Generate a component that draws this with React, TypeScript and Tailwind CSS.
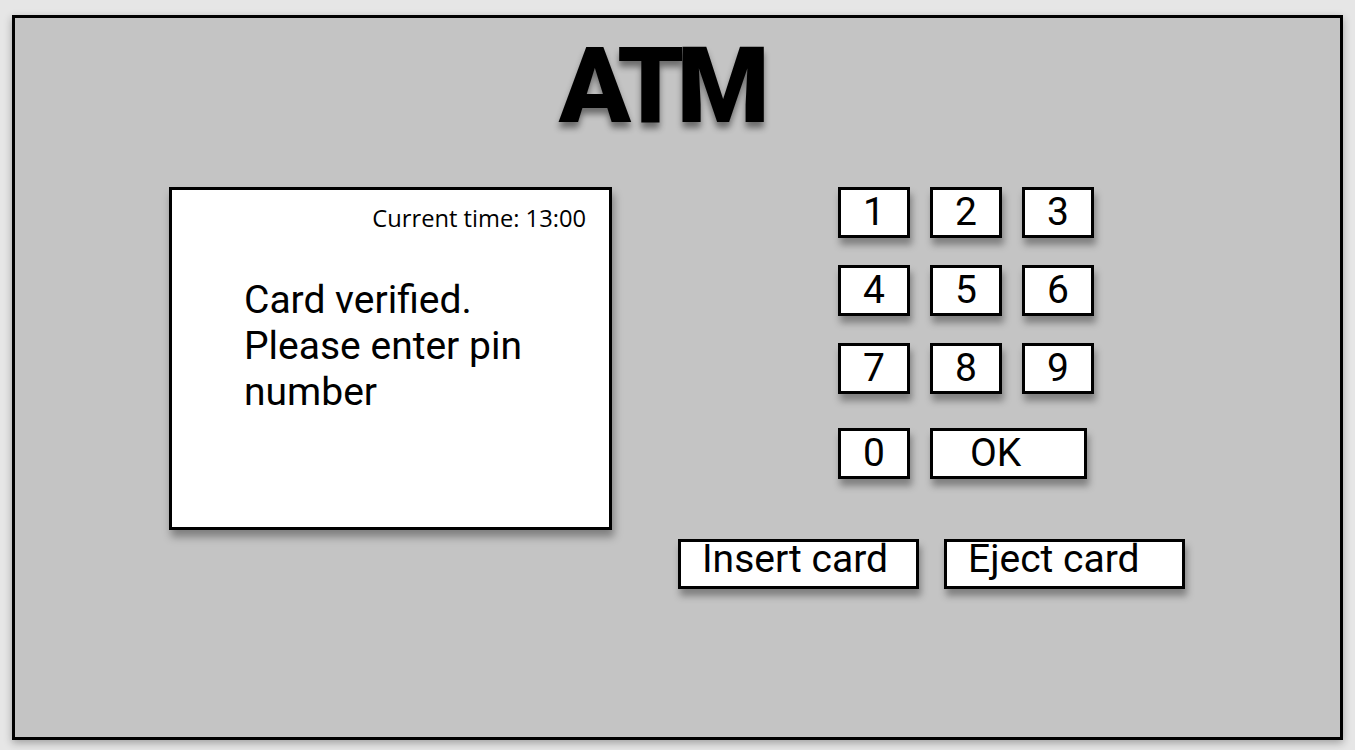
import React from "react";

const roboto = { fontFamily: "Roboto, 'Liberation Sans', sans-serif" };

function Key({ label, wide }: { label: string; wide?: boolean }) {
  return (
    <div
      className={`${wide ? "w-[157px] justify-start pl-[37px]" : "w-[72px] justify-center"} flex h-[51px] items-center border-[3px] border-black bg-white text-[39px] text-black shadow-[2px_7px_7px_rgba(0,0,0,0.35)]`}
      style={roboto}
    >
      <span className="leading-none">{label}</span>
    </div>
  );
}

function WideButton({ label }: { label: string }) {
  return (
    <div
      className="flex h-[50px] w-[241px] items-start border-[3px] border-black bg-white pl-[21px] text-[39px] leading-[34px] text-black shadow-[2px_7px_7px_rgba(0,0,0,0.35)]"
      style={roboto}
    >
      {label}
    </div>
  );
}

export default function App() {
  return (
    <div className="h-[750px] w-[1355px] bg-[#e6e6e6] pl-[12px] pt-[15px]">
      <div className="flex h-[725px] w-[1331px] flex-col border-[3px] border-black bg-[#c4c4c4] shadow-[0_3px_8px_rgba(0,0,0,0.3)]">
        <div className="mt-[15px] flex justify-center pr-[34px]">
          <h1
            className="text-[106px] font-black leading-none tracking-[-0.07em] text-black [text-shadow:0_6px_6px_rgba(0,0,0,0.45)]"
            style={roboto}
          >
            ATM
          </h1>
        </div>

        <div className="mt-[48px] flex">
          <div className="ml-[154px] flex h-[343px] w-[443px] flex-col border-[3px] border-black bg-white shadow-[2px_7px_8px_rgba(0,0,0,0.35)]">
            <div
              className="pr-[23px] pt-[17px] text-right text-[23.7px] leading-[23px] text-black"
              style={{ fontFamily: "'Open Sans', 'Liberation Sans', sans-serif" }}
            >
              Current time: 13:00
            </div>
            <div
              className="mt-[47px] pl-[72px] text-[39px] leading-[46px] text-black"
              style={roboto}
            >
              Card verified.
              <br />
              Please enter pin
              <br />
              number
            </div>
          </div>

          <div className="ml-[66px] flex flex-col">
            <div className="ml-[160px] flex flex-col">
              <div className="flex gap-[20px]">
                <Key label="1" />
                <Key label="2" />
                <Key label="3" />
              </div>
              <div className="mt-[27px] flex gap-[20px]">
                <Key label="4" />
                <Key label="5" />
                <Key label="6" />
              </div>
              <div className="mt-[27px] flex gap-[20px]">
                <Key label="7" />
                <Key label="8" />
                <Key label="9" />
              </div>
              <div className="mt-[34px] flex gap-[20px]">
                <Key label="0" />
                <Key label="OK" wide />
              </div>
            </div>
            <div className="mt-[60px] flex gap-[25px]">
              <WideButton label="Insert card" />
              <WideButton label="Eject card" />
            </div>
          </div>
        </div>
      </div>
    </div>
  );
}
